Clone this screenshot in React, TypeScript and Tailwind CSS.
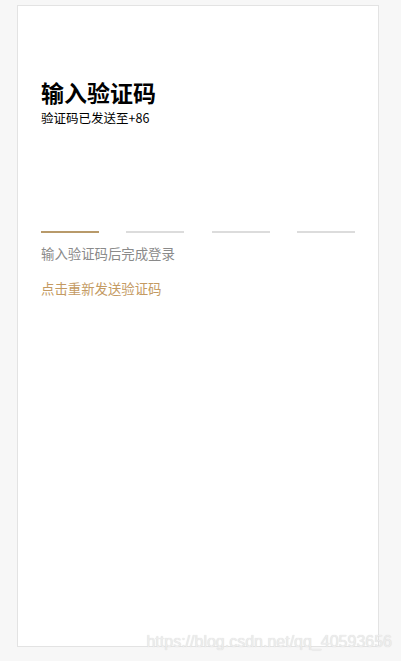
import React from 'react';

const font = { fontFamily: '"Noto Sans CJK SC", "Liberation Sans", sans-serif' };

const CodeLines: React.FC<{ active: number }> = ({ active }) => (
    <div className="flex justify-between">
        {[0, 1, 2, 3].map((i) => (
            <div key={i} className={i === active ? 'w-[58px] h-[2px] bg-[#b89a6a]' : 'w-[58px] h-[2px] bg-[#dcdcdc]'} />
        ))}
    </div>
);

const App: React.FC = () => {
    return (
        <div className="relative w-[401px] h-[661px] bg-[#f7f7f7] pt-[5px] pl-[17px] overflow-hidden" style={font}>
            <div className="w-[362px] h-[642px] bg-white border border-[#e3e3e3] px-[23px]">
                <h1 className="mt-[72px] text-[23px] leading-[28px] font-bold text-black">输入验证码</h1>
                <p className="mt-[4px] text-[12.5px] leading-[16px] text-black">验证码已发送至+86</p>
                <div className="mt-[105px]">
                    <CodeLines active={0} />
                </div>
                <p className="mt-[10px] text-[13.4px] leading-[20px] text-[#8a8a8a]">输入验证码后完成登录</p>
                <button className="block mt-[15px] text-[13.4px] leading-[20px] text-[#c49a62]">点击重新发送验证码</button>
            </div>
            <div className="absolute right-[9px] bottom-[10px] text-[16px] leading-[18px] text-[#ededed]" style={{ fontFamily: '"Liberation Sans", sans-serif', textShadow: '0 0 1px #d0d0d0' }}>
                https://blog.csdn.net/qq_40593656
            </div>
        </div>
    );
};

export default App;
